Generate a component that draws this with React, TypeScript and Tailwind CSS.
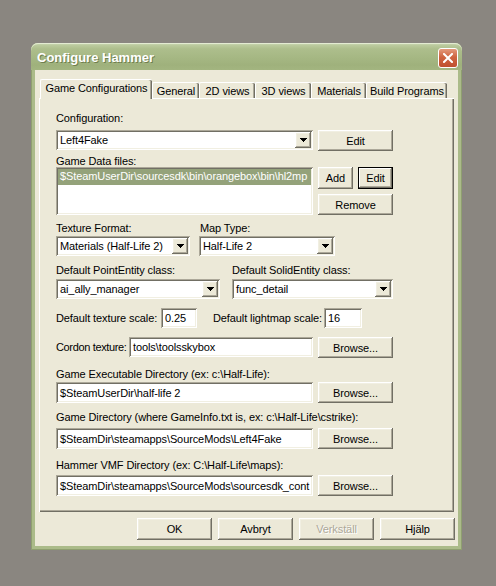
import React from "react";

const sunken =
  "shadow-[inset_1px_1px_0_#aca899,inset_-1px_-1px_0_#ffffff,inset_2px_2px_0_#716f64,inset_-2px_-2px_0_#f1efe2]";
const raised =
  "shadow-[inset_-1px_-1px_0_#716f64,inset_1px_1px_0_#ffffff,inset_-2px_-2px_0_#aca899,inset_2px_2px_0_#f1efe2]";
const focusedRaised =
  "shadow-[inset_0_0_0_1px_#000000,inset_-2px_-2px_0_#716f64,inset_2px_2px_0_#ffffff,inset_-3px_-3px_0_#aca899]";

function Label({ children, className = "" }: { children: React.ReactNode; className?: string }) {
  return <div className={"h-[12px] leading-[12px] whitespace-nowrap " + className}>{children}</div>;
}

function Arrow() {
  return (
    <svg width="7" height="4" viewBox="0 0 7 4" shapeRendering="crispEdges">
      <rect x="0" y="0" width="7" height="1" fill="#000" />
      <rect x="1" y="1" width="5" height="1" fill="#000" />
      <rect x="2" y="2" width="3" height="1" fill="#000" />
      <rect x="3" y="3" width="1" height="1" fill="#000" />
    </svg>
  );
}

function Combo({ value, className = "" }: { value: string; className?: string }) {
  return (
    <div className={"flex h-[20px] items-center bg-white px-[2px] " + sunken + " " + className}>
      <div className="flex-1 overflow-hidden whitespace-nowrap pl-[2px] leading-[12px]">{value}</div>
      <div className={"flex h-[16px] w-[16px] items-center justify-center bg-[#ece9d8] " + raised}>
        <Arrow />
      </div>
    </div>
  );
}

function Input({ value, className = "" }: { value: string; className?: string }) {
  return (
    <div
      className={
        "flex items-center overflow-hidden whitespace-nowrap bg-white pl-[4px] leading-[12px] " +
        sunken +
        " " +
        className
      }
    >
      {value}
    </div>
  );
}

function Button({
  children,
  className = "",
  focused = false,
  disabled = false,
}: {
  children: React.ReactNode;
  className?: string;
  focused?: boolean;
  disabled?: boolean;
}) {
  return (
    <div
      className={
        "flex shrink-0 items-center justify-center bg-[#ece9d8] leading-[12px] " +
        (focused ? focusedRaised : raised) +
        " " +
        (disabled ? "text-[#aca899] [text-shadow:1px_1px_0_#ffffff] " : "text-black ") +
        className
      }
    >
      {children}
    </div>
  );
}

function Tab({ children, className = "" }: { children: React.ReactNode; className?: string }) {
  return (
    <div
      className={
        "flex h-[17px] shrink-0 items-start justify-center rounded-tl-[2px] rounded-tr-[2px] border-l border-t border-white bg-[#ece9d8] pt-[2px] leading-[12px] shadow-[inset_-1px_0_0_#716f64,inset_-2px_0_0_#aca899] " +
        className
      }
    >
      {children}
    </div>
  );
}

export default function App() {
  return (
    <div className="h-[586px] w-[496px] overflow-hidden bg-[#8a8680] pl-[31px] pt-[43px] font-['Liberation_Sans',Arial,sans-serif] text-[11px] tracking-[-0.1px] text-black">
      <div className="flex h-[507px] w-[431px] flex-col rounded-t-[7px] bg-[#abbb89] shadow-[inset_0_0_0_1px_#8f9f70]">
        {/* Title bar */}
        <div className="flex h-[27px] shrink-0 items-start justify-between rounded-t-[7px] bg-[linear-gradient(to_bottom,#d3dfbd_0px,#bccb9f_2px,#adbe8c_6px,#a6b884_14px,#9fb17c_22px,#a3b580_27px)] pl-[6px] pr-[4px] shadow-[inset_0_1px_0_#e3ebd2]">
          <div className="mt-[7px] text-[13px] font-bold leading-[15px] tracking-normal text-white [text-shadow:1px_1px_0_#6f7f4e]">
            Configure Hammer
          </div>
          <div className="mt-[5px] flex h-[20px] w-[20px] items-center justify-center rounded-[3px] border border-white bg-[linear-gradient(to_bottom,#e49a7c,#cf6440_45%,#c0502f)]">
            <svg width="10" height="10" viewBox="0 0 10 10">
              <path d="M1 1L9 9M9 1L1 9" stroke="#ffffff" strokeWidth="2" strokeLinecap="square" />
            </svg>
          </div>
        </div>
        {/* Body */}
        <div className="mx-[4px] mb-[4px] flex flex-1 flex-col bg-[#ece9d8] pt-[9px]">
          {/* Tabs */}
          <div className="flex h-[20px] items-end pl-[5px]">
            <div className="relative z-10 flex h-[20px] w-[112px] shrink-0 items-start justify-center rounded-tl-[2px] rounded-tr-[2px] border-l border-t border-white bg-[#ece9d8] pt-[2px] leading-[12px] shadow-[inset_-1px_0_0_#716f64,inset_-2px_0_0_#aca899]">
              Game Configurations
            </div>
            <Tab className="w-[47px]">General</Tab>
            <Tab className="w-[56px]">2D views</Tab>
            <Tab className="w-[56px]">3D views</Tab>
            <Tab className="w-[55px]">Materials</Tab>
            <Tab className="w-[81px]">Build Programs</Tab>
          </div>
          {/* Panel */}
          <div className="mx-[4px] -mt-[1px] h-[414px] border-l border-t border-white bg-[#ece9d8] pl-[16px] pt-[13px] shadow-[inset_-1px_-1px_0_#716f64,inset_-2px_-2px_0_#aca899]">
            <Label>Configuration:</Label>
            <div className="mt-[6px] flex items-start gap-[5px]">
              <Combo value="Left4Fake" className="w-[257px]" />
              <Button className="h-[21px] w-[75px]">Edit</Button>
            </div>
            <Label className="mt-[4px]">Game Data files:</Label>
            <div className="flex h-[48px] gap-[5px]">
              <div className={"h-[48px] w-[257px] overflow-hidden bg-white p-[2px] " + sunken}>
                <div className="h-[16px] overflow-hidden whitespace-nowrap bg-[#94a27a] pl-[2px] pt-[1px] leading-[13px] text-white">
                  $SteamUserDir\sourcesdk\bin\orangebox\bin\hl2mp
                </div>
              </div>
              <div className="flex w-[75px] flex-col">
                <div className="flex gap-[5px]">
                  <Button className="h-[22px] w-[35px]">Add</Button>
                  <Button className="h-[22px] w-[35px]" focused>
                    Edit
                  </Button>
                </div>
                <Button className="mt-[5px] h-[21px] w-[75px]">Remove</Button>
              </div>
            </div>
            <div className="mt-[7px] flex">
              <div className="flex w-[134px] flex-col">
                <Label>Texture Format:</Label>
                <Combo value="Materials (Half-Life 2)" className="mt-[2px] w-[134px]" />
              </div>
              <div className="ml-[9px] flex w-[136px] flex-col">
                <Label className="pl-[1px]">Map Type:</Label>
                <Combo value="Half-Life 2" className="mt-[2px] w-[136px]" />
              </div>
            </div>
            <div className="mt-[8px] flex">
              <div className="flex w-[164px] flex-col">
                <Label>Default PointEntity class:</Label>
                <Combo value="ai_ally_manager" className="mt-[3px] w-[164px]" />
              </div>
              <div className="ml-[12px] flex w-[161px] flex-col">
                <Label>Default SolidEntity class:</Label>
                <Combo value="func_detail" className="mt-[3px] w-[161px]" />
              </div>
            </div>
            <div className="mt-[9px] flex h-[20px] items-center">
              <div className="w-[105px] whitespace-nowrap">Default texture scale:</div>
              <Input value="0.25" className="h-[20px] w-[36px]" />
              <div className="ml-[16px] w-[111px] whitespace-nowrap">Default lightmap scale:</div>
              <Input value="16" className="h-[20px] w-[38px]" />
            </div>
            <div className="mt-[9px] flex h-[21px] items-start">
              <div className="flex h-[20px] w-[73px] items-center whitespace-nowrap tracking-[-0.35px]">
                Cordon texture:
              </div>
              <Input value="tools\toolsskybox" className="h-[20px] w-[184px]" />
              <Button className="ml-[5px] h-[21px] w-[75px]">Browse...</Button>
            </div>
            <Label className="mt-[10px]">Game Executable Directory (ex: c:\Half-Life):</Label>
            <div className="mt-[2px] flex gap-[5px]">
              <Input value="$SteamUserDir\half-life 2" className="h-[21px] w-[257px]" />
              <Button className="h-[21px] w-[75px]">Browse...</Button>
            </div>
            <Label className="mt-[8px]">Game Directory (where GameInfo.txt is, ex: c:\Half-Life\cstrike):</Label>
            <div className="mt-[5px] flex gap-[5px]">
              <Input value="$SteamDir\steamapps\SourceMods\Left4Fake" className="h-[21px] w-[257px]" />
              <Button className="h-[21px] w-[75px]">Browse...</Button>
            </div>
            <Label className="mt-[10px]">Hammer VMF Directory (ex: C:\Half-Life\maps):</Label>
            <div className="mt-[4px] flex gap-[5px]">
              <Input value="$SteamDir\steamapps\SourceMods\sourcesdk_cont" className="h-[21px] w-[257px]" />
              <Button className="h-[21px] w-[75px]">Browse...</Button>
            </div>
          </div>
          {/* Bottom buttons */}
          <div className="mt-[6px] flex justify-end gap-[6px] pr-[3px]">
            <Button className="h-[22px] w-[75px]">OK</Button>
            <Button className="h-[22px] w-[75px]">Avbryt</Button>
            <Button className="h-[22px] w-[75px]" disabled>
              Verkställ
            </Button>
            <Button className="h-[22px] w-[75px]">Hjälp</Button>
          </div>
        </div>
      </div>
    </div>
  );
}
